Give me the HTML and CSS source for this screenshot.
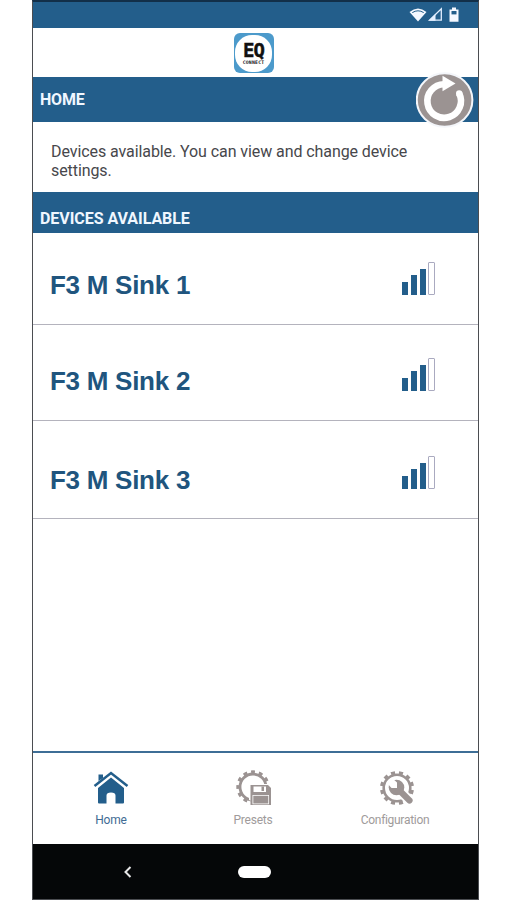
FILE: index.html
```html
<!DOCTYPE html>
<html lang="en">
<head>
<meta charset="utf-8">
<title>EQ Connect</title>
<link rel="stylesheet" href="styles.css">
</head>
<body>
<main class="phone">
  <div class="status">
    <svg width="52" height="16" viewBox="0 0 52 16">
      <path d="M0.500 5Q9 -2 17.500 5L9 14.500Z" fill="#f4f8ff"/>
      <path d="M3.300 5.600Q9 2 14.700 5.600" fill="none" stroke="#235e8b" stroke-width="1"/>
      <path d="M20.500 13.200L32.300 1.800V13.200Z" fill="none" stroke="#e3efff" stroke-width="1.300"/>
      <path d="M19.500 13.800L26.500 7V13.800Z" fill="#e3efff"/>
      <path d="M43 0.500h4v2h2.500v12.300h-9V2.500h2.500Z" fill="#f4f8ff"/>
      <path d="M42.500 4h5v3.400h-5Z" fill="#235e8b"/>
    </svg>
  </div>
  <header class="brand">
    <div class="logo"><div class="disc"><b class="eq">EQ</b><b class="connect">CONNECT</b></div></div>
  </header>
  <div class="bar title">
    <h1>HOME</h1>
    <button class="refresh" aria-label="Refresh">
      <svg width="58" height="56" viewBox="0 0 58 56">
        <ellipse cx="28.600" cy="28" rx="27.800" ry="26.800" fill="#9b9392" stroke="#f4f6fa" stroke-width="2"/>
        <path d="M43.200 21.500A16.800 16.800 0 1 1 28 12.200" fill="none" stroke="#fff" stroke-width="6.600"/>
        <circle cx="43.200" cy="21.500" r="3.200" fill="#fff"/>
        <path d="M26.500 3.800L39.500 11.500L26.500 19.200Z" fill="#fff"/>
      </svg>
    </button>
  </div>
  <p class="intro">Devices available. You can view and change device settings.</p>
  <h2 class="bar section">DEVICES AVAILABLE</h2>
  <ul class="devices">
    <li><span>F3 M Sink 1</span><i class="signal"><i></i><i></i><i></i><i></i></i></li>
    <li><span>F3 M Sink 2</span><i class="signal"><i></i><i></i><i></i><i></i></i></li>
    <li><span>F3 M Sink 3</span><i class="signal"><i></i><i></i><i></i><i></i></i></li>
  </ul>
  <nav class="tabs">
    <a class="tab active">
      <svg width="36" height="36" viewBox="0 0 36 36">
        <path d="M5.500 11V4.500h4.500V8Z" fill="#235e8b"/>
        <path d="M1.500 16L18 3L34.500 16" fill="none" stroke="#235e8b" stroke-width="2.500"/>
        <path d="M18 7.600L31 18V32.500Q31 33.500 30 33.500H22.500V25.500Q22.500 22.500 18 22.500Q13.500 22.500 13.500 25.500V33.500H6Q5 33.500 5 32.500V18Z" fill="#235e8b"/>
      </svg>
      <span class="home-label">Home</span>
    </a>
    <a class="tab">
      <svg width="36" height="36" viewBox="0 0 36 36">
        <circle cx="18" cy="17" r="13" fill="none" stroke="#9b9392" stroke-width="2.800"/>
        <circle cx="18" cy="17" r="15" fill="none" stroke="#9b9392" stroke-width="3.400" pathLength="120" stroke-dasharray="5 5" stroke-dashoffset="2.500"/>
        <path d="M14 14H36V36H19V32L14 30Z" fill="#fff"/>
        <path d="M15.500 15H33L36 18V35H15.500Z" fill="#9b9392"/>
        <path d="M18.500 16.500h12.500v5.500H18.500ZM17.500 25h16.500v9.300H17.500Z" fill="#fff"/>
        <path d="M26.500 16.500h2.500v4.500h-2.500ZM18.300 25.800h15v7.700h-15Z" fill="#9b9392"/>
      </svg>
      <span class="presets-label">Presets</span>
    </a>
    <a class="tab">
      <svg class="config-icon" width="36" height="36" viewBox="0 0 36 36">
        <circle cx="18" cy="18" r="13.300" fill="none" stroke="#9b9392" stroke-width="2.600"/>
        <circle cx="18" cy="18" r="15.400" fill="none" stroke="#9b9392" stroke-width="3.200" pathLength="120" stroke-dasharray="5 5" stroke-dashoffset="-2.500"/>
        <path d="M23 23L34 34" stroke="#fff" stroke-width="10" stroke-linecap="round"/>
        <circle cx="17.500" cy="17.500" r="7.800" fill="#9b9392"/>
        <path d="M19 19L30.500 30.500" stroke="#9b9392" stroke-width="6.200" stroke-linecap="round"/>
        <path d="M12.500 7.500L18 12.500V18H12.500L7.500 12.500Z" fill="#fff"/>
      </svg>
      <span class="config-label">Configuration</span>
    </a>
  </nav>
  <footer class="system">
    <svg width="8" height="12" viewBox="0 0 8 12"><path d="M6.500 1L1.500 6L6.500 11" fill="none" stroke="#e8e8e8" stroke-width="2"/></svg>
    <i class="pill"></i>
  </footer>
</main>
</body>
</html>
```

FILE: styles.css
```css
* { box-sizing: border-box; }
body { margin: 0; background: #fff; font-family: Roboto, sans-serif; }
.phone {
  width: 447px; height: 900px; margin-left: 32px;
  display: flex; flex-direction: column;
  border: 1px solid #4b4d51; border-top: 2px solid #122f49;
  background: #fff;
}
.status {
  height: 26px; flex: none; background: #235e8b;
  display: flex; justify-content: flex-end; padding: 5px 17px 0 0;
}
.brand { height: 49px; flex: none; display: flex; justify-content: center; padding-top: 5px; }
.logo {
  width: 40px; height: 40px; border-radius: 6px; background: #4c9acb; margin-right: 4px;
  display: flex; align-items: center; justify-content: center;
}
.disc {
  width: 37px; height: 37px; border-radius: 17px; background: #fff; color: #111;
  display: flex; flex-direction: column; align-items: center; padding-top: 6px;
}
.eq { font: bold 19px/19px "DejaVu Sans Mono", monospace; letter-spacing: -1px; -webkit-text-stroke: 0.400px #111; }
.connect { font: bold 4.800px/5px "DejaVu Sans Mono", monospace; letter-spacing: 0.200px; }
.bar { flex: none; background: #235e8b; color: #f0f7ff; }
.title { height: 45px; display: flex; align-items: center; justify-content: space-between; padding: 0 4px 0 7px; }
.title h1 { margin: 1px 0 0; font-size: 16px; font-weight: 700; line-height: 20px; letter-spacing: -0.200px; }
.refresh { width: 58px; height: 56px; margin: 0; padding: 0; border: 0; background: none; flex: none; }
.refresh svg { display: block; }
.intro {
  height: 70px; flex: none; margin: 0; padding: 20px 60px 0 18px;
  font-size: 16px; line-height: 19px; letter-spacing: -0.080px; color: #47474b;
}
.section { height: 41px; margin: 0; padding: 17px 0 0 7px; font-size: 16px; font-weight: 700; line-height: 20px; letter-spacing: -0.050px; }
.devices { list-style: none; margin: 0; padding: 0; }
.devices li {
  height: 92px; border-bottom: 1px solid #b4b3bd; padding: 0 43px 0 17px;
  display: flex; justify-content: space-between; align-items: flex-end;
}
.devices li:nth-child(2) { height: 96px; }
.devices li:nth-child(3) { height: 98px; }
.devices span {
  font: bold 26px/30px "Liberation Sans", sans-serif; letter-spacing: -0.270px; color: #20557e;
  margin-bottom: 24px;
}
.devices li:nth-child(3) span { margin-bottom: 23px; }
.signal { display: flex; align-items: flex-end; gap: 3px; margin-bottom: 29px; }
.signal i { width: 6px; height: 13px; background: #235e8b; }
.signal i:nth-child(2) { height: 20px; }
.signal i:nth-child(3) { height: 26px; }
.signal i:nth-child(4) { width: 7px; height: 33px; background: #fff; border: 1px solid #aaaac0; border-radius: 1px; margin-left: -1px; }
.tabs {
  height: 93px; flex: none; margin-top: auto; border-top: 2px solid #3e6e96;
  display: grid; grid-template-columns: repeat(3, 142px); padding-left: 7px;
}
.tab { display: flex; flex-direction: column; align-items: center; padding-top: 17px; font-size: 12px; color: #a09b9b; }
.tab span { line-height: 16px; margin-top: 6px; }
.tab.active { color: #416b94; }
.home-label, .presets-label { letter-spacing: -0.200px; }
.config-icon { margin-left: 3px; }
.config-label { letter-spacing: -0.300px; }
.system { height: 55px; flex: none; background: #050708; display: flex; align-items: center; padding-left: 91px; gap: 106px; }
.pill { width: 33px; height: 12px; border-radius: 6px; background: #fff; }
```
